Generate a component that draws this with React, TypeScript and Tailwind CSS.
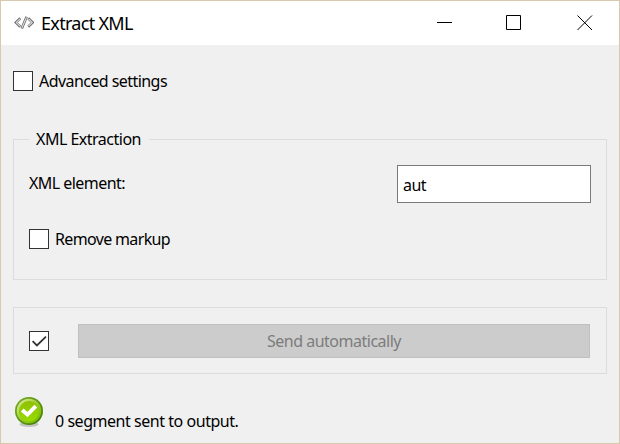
import React from "react";

function CheckBox({ checked = false }: { checked?: boolean }) {
  return (
    <span className="block size-5 shrink-0 border border-[#333] bg-white">
      {checked && (
        <svg width="18" height="18" viewBox="0 0 18 18" fill="none" stroke="#333" strokeWidth="1.8">
          <path d="M2.6 9.2 6.9 13.4 16 4.6" />
        </svg>
      )}
    </span>
  );
}

function CodeIcon() {
  return (
    <svg width="20" height="14" viewBox="0 0 20 14" fill="none" className="shrink-0">
      <g stroke="#6e6e6e" strokeWidth="2.6" strokeLinejoin="miter">
        <path d="M6.3 2.3 1.9 6.5 6.3 10.7" />
        <path d="M14.2 2.3 18.6 6.5 14.2 10.7" />
        <path d="M12.6 .8 7.8 12.4" />
      </g>
      <g stroke="#dedede" strokeWidth="1.1">
        <path d="M6 2.8 2.3 6.5 6 10.2" />
        <path d="M14.5 2.8 18.2 6.5 14.5 10.2" />
        <path d="M12.4 1.4 8 11.8" />
      </g>
    </svg>
  );
}

function SuccessIcon() {
  return (
    <svg width="30" height="32" viewBox="0 0 30 32" className="shrink-0">
      <defs>
        <linearGradient id="ring" x1="0" y1="0" x2="1" y2="1">
          <stop offset="0" stopColor="#7cae28" />
          <stop offset="1" stopColor="#377d00" />
        </linearGradient>
        <linearGradient id="rim" x1="0" y1="0" x2="1" y2="1">
          <stop offset="0" stopColor="#e4f2ae" />
          <stop offset=".5" stopColor="#9cca28" />
          <stop offset="1" stopColor="#70b400" />
        </linearGradient>
        <linearGradient id="face" x1="0" y1="0" x2="0" y2="1">
          <stop offset="0" stopColor="#8fc000" />
          <stop offset="1" stopColor="#96dc00" />
        </linearGradient>
      </defs>
      <ellipse cx="15" cy="28.3" rx="9.5" ry="2.6" fill="#c2c2c2" />
      <circle cx="15" cy="15" r="14" fill="url(#ring)" />
      <circle cx="15" cy="15" r="12.3" fill="url(#rim)" />
      <circle cx="15" cy="15.2" r="10.2" fill="url(#face)" />
      <path d="M8.2 14 13.5 18.6 21.8 10.2" fill="none" stroke="#fff" strokeWidth="4" />
    </svg>
  );
}

export default function App() {
  return (
    <div className="flex h-[444px] w-[620px] flex-col border border-[#d8c8ae] bg-[#f0f0f0] font-['Noto_Sans',sans-serif] text-[16px] leading-5 tracking-[-0.5px] text-black">
      <header className="flex h-11 shrink-0 items-center bg-white pl-[13px]">
        <CodeIcon />
        <h1 className="ml-[7px] text-[18px] leading-6 tracking-[-0.7px]">Extract XML</h1>
        <div className="ml-auto flex items-center pr-[26px]">
          <svg width="156" height="16" viewBox="0 0 156 16" fill="none" stroke="#000">
            <path d="M0 7.5h15M69.5 .5h14v14h-14zM140.5 .5l14.5 14.5M155 .5l-14.5 14.5" />
          </svg>
        </div>
      </header>

      <main className="flex flex-col px-3">
        <label className="mt-[26px] flex items-center gap-1.5">
          <CheckBox />
          <span className="tracking-[-0.56px]">Advanced settings</span>
        </label>

        <fieldset className="mt-[38px] h-[151px] border border-[#dcdcdc] px-[15px]">
          <legend className="h-[21px] w-[120px] pl-[7px]">XML Extraction</legend>
          <div className="mt-[15px] flex h-[38px] items-center justify-between">
            <span className="pb-0.5 tracking-[-0.55px]">XML element:</span>
            <div className="flex h-[38px] w-[194px] items-center border border-[#7a7a7a] bg-white px-[5px] pt-px">aut</div>
          </div>
          <label className="mt-[26px] flex items-center gap-1.5">
            <CheckBox />
            <span className="tracking-[-0.65px]">Remove markup</span>
          </label>
        </fieldset>

        <section className="mt-[27px] flex h-[67px] items-center border border-[#dcdcdc] pr-4 pl-[15px]">
          <CheckBox checked />
          <button className="ml-[29px] h-[34px] flex-1 border border-[#bfbfbf] bg-[#ccc] text-[#7c7c7c]">
            Send automatically
          </button>
        </section>

        <footer className="mt-[22px] flex items-start pl-px">
          <SuccessIcon />
          <span className="mt-[15px] ml-[11px] tracking-[-0.46px]">0 segment sent to output.</span>
        </footer>
      </main>
    </div>
  );
}
